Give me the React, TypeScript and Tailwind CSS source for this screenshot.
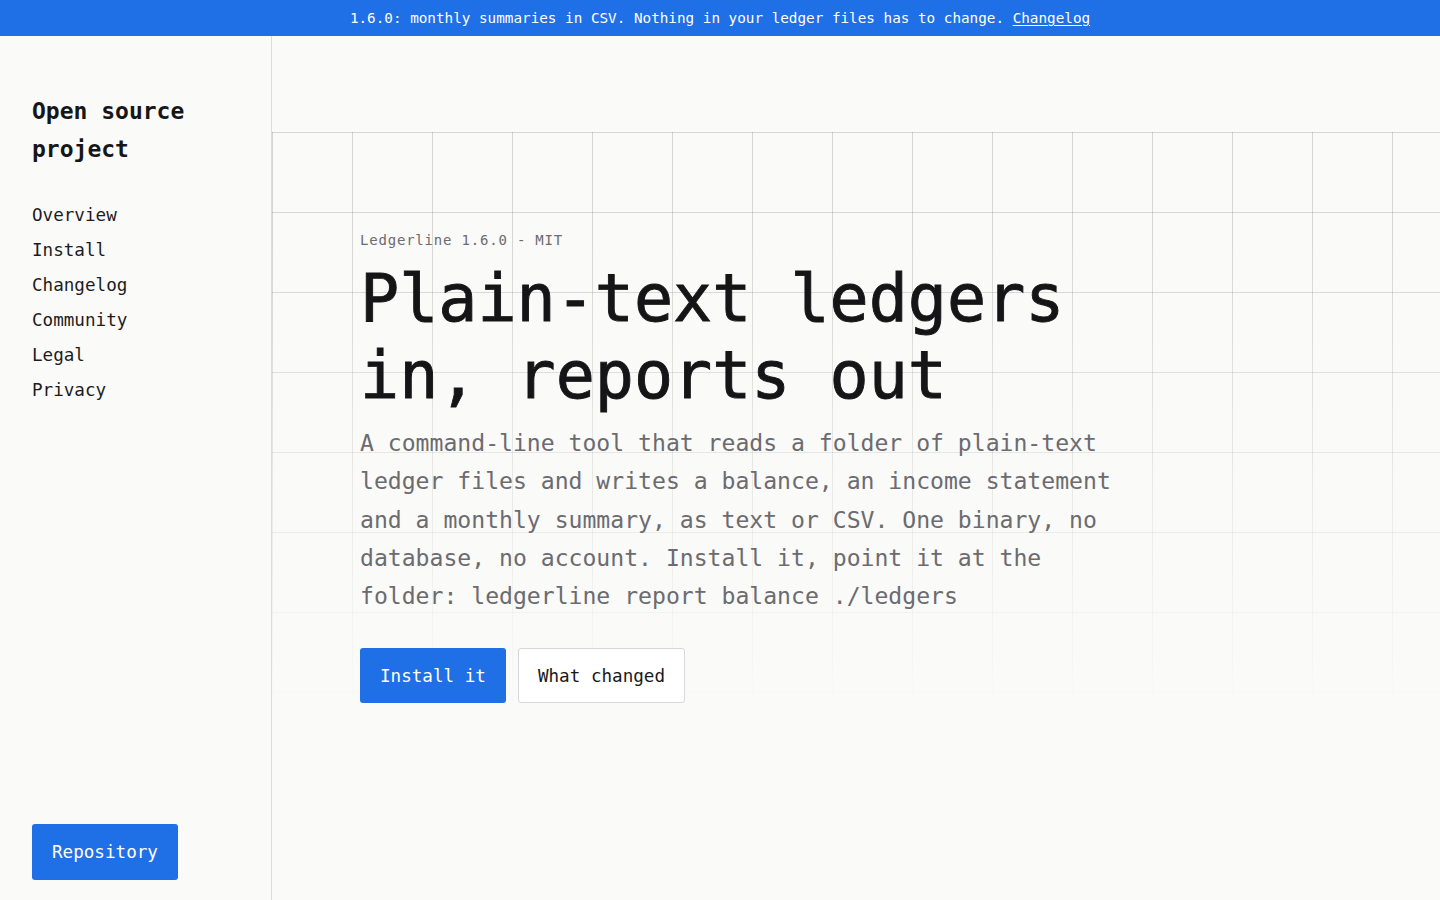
const navItems = ["Overview", "Install", "Changelog", "Community", "Legal", "Privacy"];

const App = () => {
  return (
    <div className="min-h-screen bg-[#fafaf8] font-['DejaVu_Sans_Mono',monospace] text-[#18181a]">
      <div className="flex h-9 items-center justify-center bg-[#1f6fe6] pt-0.5 text-[14.3px] text-white">
        <p>
          1.6.0: monthly summaries in CSV. Nothing in your ledger files has to change.{" "}
          <a href="#" className="underline underline-offset-2">
            Changelog
          </a>
        </p>
      </div>

      <div className="flex">
        <aside className="flex h-[864px] w-[272px] shrink-0 flex-col border-r border-[#dcdcdc] px-8 pt-[57px] pb-5">
          <h2 className="text-[23px] font-bold leading-[37.5px] text-[#161618]">Open source project</h2>
          <nav className="mt-[30px] flex flex-col">
            {navItems.map((item) => (
              <a key={item} href="#" className="text-[17.6px] leading-[35px] text-[#1c1c1e]">
                {item}
              </a>
            ))}
          </nav>
          <div className="mt-auto">
            <a
              href="#"
              className="inline-flex h-14 items-center rounded-[3px] bg-[#1f6fe6] px-5 text-[17.6px] text-white"
            >
              Repository
            </a>
          </div>
        </aside>

        <main className="flex-1 pt-24">
          <section className="relative pt-[98px] pl-[88px]">
            {/* background grid */}
            <div className="pointer-events-none absolute inset-x-0 top-0 h-[580px] bg-[linear-gradient(to_right,rgba(0,0,0,0.14)_1px,transparent_1px),linear-gradient(to_bottom,rgba(0,0,0,0.14)_1px,transparent_1px)] bg-[size:80px_80px] [mask-image:linear-gradient(to_bottom,black_20%,transparent_100%)]" />

            <div className="relative max-w-[765px]">
              <p className="text-[14px] leading-5 tracking-[0.8px] text-[#6b6b70]">Ledgerline 1.6.0 - MIT</p>
              <h1 className="mt-[10px] text-[65px] leading-[77px] text-[#151517] [-webkit-text-stroke:0.9px_#151517]">
                Plain-text ledgers in, reports out
              </h1>
              <p className="mt-[10px] text-[23.1px] leading-[38.3px] text-[#6b6b70]">
                A command-line tool that reads a folder of plain-text ledger files and writes a balance, an income
                statement and a monthly summary, as text or CSV. One binary, no database, no account. Install it,
                point it at the folder: ledgerline report balance ./ledgers
              </p>
              <div className="mt-[33px] flex gap-3">
                <a
                  href="#"
                  className="inline-flex h-[55px] items-center rounded-[3px] bg-[#1f6fe6] px-5 text-[17.6px] text-white"
                >
                  Install it
                </a>
                <a
                  href="#"
                  className="inline-flex h-[55px] items-center rounded-[3px] border border-[#d8d8dc] bg-white px-[19px] text-[17.6px] text-[#18181a]"
                >
                  What changed
                </a>
              </div>
            </div>
          </section>
        </main>
      </div>
    </div>
  );
};

export default App;
